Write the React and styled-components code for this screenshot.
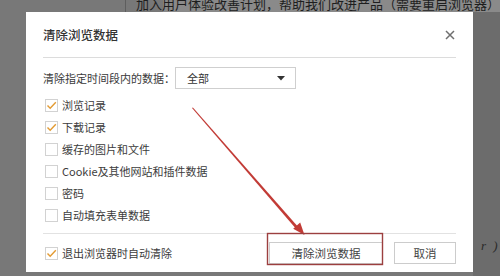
import React from "react";
import styled, { createGlobalStyle } from "styled-components";

const Global = createGlobalStyle`
  html, body { margin: 0; padding: 0; }
  body { font-family: "Noto Sans CJK SC", "Noto Sans", sans-serif; }
`;

const Page = styled.div`
  position: relative;
  width: 500px;
  height: 276px;
  overflow: hidden;
  background: #787878;
  display: grid;
  grid-template-rows: 12px 1fr;
  grid-template-columns: 473px 1fr;
`;

const BgHeader = styled.div`
  grid-column: 1 / 3;
  display: flex;
  align-items: flex-start;
  background: linear-gradient(to right, #787878 0 163px, #8a8a8a 163px);
  overflow: hidden;
`;

const BgEdge = styled.div`
  width: 163px;
  height: 12px;
  border-right: 1px solid #5e5e5e;
  box-sizing: border-box;
`;

const BgHeaderText = styled.div`
  margin-left: 10px;
  margin-top: -5px;
  font-size: 13px;
  line-height: 18px;
  color: #1e1e1e;
  white-space: nowrap;
`;

const BgLeft = styled.div`
  background: #787878;
`;

const BgRight = styled.div`
  background: #6c6c6c;
  display: flex;
  flex-direction: column;
  justify-content: flex-end;
  padding: 0 0 22px 8px;
`;

const BgRightText = styled.div`
  font-family: "Liberation Serif", serif;
  font-style: italic;
  font-size: 13px;
  color: #2a2a2a;
  letter-spacing: 2px;
`;

const Dialog = styled.div`
  position: absolute;
  left: 26px;
  top: 12px;
  width: 447px;
  height: 260px;
  background: #fff;
  box-sizing: border-box;
  padding: 0 17px 0 17px;
  display: flex;
  flex-direction: column;
  color: #3a3a3a;
`;

const Header = styled.div`
  height: 45px;
  border-bottom: 1px solid #dcdcdc;
  display: flex;
  align-items: center;
  justify-content: space-between;
`;

const Title = styled.div`
  font-size: 12.5px;
  color: #333;
  font-weight: 500;
`;

const Close = styled.svg`
  width: 10px;
  height: 10px;
  margin-right: 1px;
`;

const Body = styled.div`
  padding-top: 9px;
  display: flex;
  flex-direction: column;
`;

const RangeRow = styled.div`
  display: flex;
  align-items: center;
  height: 22px;
  font-size: 11px;
  margin-bottom: 5px;
`;

const RangeLabel = styled.span`
  width: 132px;
  white-space: nowrap;
`;

const Select = styled.div`
  width: 121px;
  height: 22px;
  box-sizing: border-box;
  border: 1px solid #cfcfcf;
  display: flex;
  align-items: center;
  justify-content: space-between;
  padding: 0 10px 0 11px;
  font-size: 11px;
  color: #333;
`;

const Caret = styled.svg`
  width: 8px;
  height: 5px;
`;

const CheckRow = styled.label`
  display: flex;
  align-items: center;
  height: 22px;
  font-size: 11px;
  color: #3c3c3c;
  padding-left: 2px;
`;

const Box = styled.span`
  width: 13px;
  height: 13px;
  box-sizing: border-box;
  border: 1px solid #d2d2d2;
  background: #fff;
  margin-right: 4px;
  display: flex;
  align-items: center;
  justify-content: center;
`;

const Divider = styled.div`
  margin-top: 7px;
  border-top: 1px solid #e2e2e2;
`;

const Footer = styled.div`
  height: 38px;
  display: flex;
  align-items: center;
`;

const Spacer = styled.div`
  flex: 1;
`;

const Button = styled.div`
  width: ${(p) => p.$w}px;
  height: 22px;
  box-sizing: border-box;
  border: 1px solid #cccccc;
  display: flex;
  align-items: center;
  justify-content: center;
  font-size: 11.5px;
  color: #444;
  margin-left: ${(p) => p.$gap || 0}px;
`;

const Annotation = styled.svg`
  position: absolute;
  left: 0;
  top: 0;
  width: 500px;
  height: 276px;
  pointer-events: none;
`;

function Check({ checked, children }) {
  return (
    <CheckRow>
      <Box>
        {checked && (
          <svg width="11" height="11" viewBox="0 0 11 11">
            <path d="M1.5 5.5 L4.2 8.3 L9.8 2.2" fill="none" stroke="#e39b33" strokeWidth="1.4" />
          </svg>
        )}
      </Box>
      {children}
    </CheckRow>
  );
}

const items = [
  { label: "浏览记录", checked: true },
  { label: "下载记录", checked: true },
  { label: "缓存的图片和文件", checked: false },
  { label: "Cookie及其他网站和插件数据", checked: false },
  { label: "密码", checked: false },
  { label: "自动填充表单数据", checked: false },
];

export default function App() {
  return (
    <>
      <Global />
      <Page>
        <BgHeader>
          <BgEdge />
          <BgHeaderText>加入用户体验改善计划，帮助我们改进产品（需要重启浏览器）</BgHeaderText>
        </BgHeader>
        <BgLeft />
        <BgRight>
          <BgRightText>r )</BgRightText>
        </BgRight>

        <Dialog>
          <Header>
            <Title>清除浏览数据</Title>
            <Close viewBox="0 0 10 10">
              <path d="M1 1 L9 9 M9 1 L1 9" stroke="#6f6f6f" strokeWidth="1.5" />
            </Close>
          </Header>
          <Body>
            <RangeRow>
              <RangeLabel>清除指定时间段内的数据：</RangeLabel>
              <Select>
                <span>全部</span>
                <Caret viewBox="0 0 8 5">
                  <path d="M0 0 L8 0 L4 4.5 Z" fill="#333" />
                </Caret>
              </Select>
            </RangeRow>
            {items.map((it) => (
              <Check key={it.label} checked={it.checked}>
                {it.label}
              </Check>
            ))}
          </Body>
          <Divider />
          <Footer>
            <Check checked>退出浏览器时自动清除</Check>
            <Spacer />
            <Button $w={114}>清除浏览数据</Button>
            <Button $w={62} $gap={11}>取消</Button>
          </Footer>
        </Dialog>

        <Annotation viewBox="0 0 500 276">
          <polygon points="192,108 192.9,107.4 298.4,227.2 296.2,229.1" fill="#c23b36" />
          <polygon points="304.5,235 300.2,222.6 293.2,228.8" fill="#c23b36" />
          <rect x="267.5" y="233.5" width="115" height="31" fill="none" stroke="#9c3f3f" strokeWidth="1.4" />
        </Annotation>
      </Page>
    </>
  );
}
